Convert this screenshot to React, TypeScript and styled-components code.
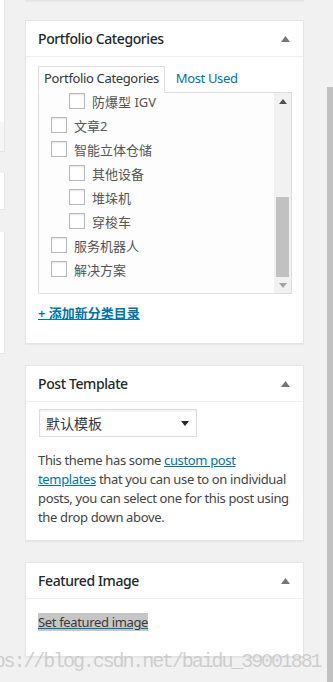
import React from "react";
import styled, { createGlobalStyle } from "styled-components";

const GlobalStyle = createGlobalStyle`
  html, body { margin: 0; padding: 0; background: #f1f1f1; }
  body {
    font-family: "Noto Sans", "Noto Sans CJK SC", sans-serif;
    font-size: 13px;
    color: #444;
  }
  * { box-sizing: border-box; }
`;

const Page = styled.div`
  position: relative;
  display: flex;
  width: 333px;
  height: 682px;
  overflow: hidden;
  background: #f1f1f1;
`;

const LeftCol = styled.div`
  flex: none;
  width: 5px;
  display: flex;
  flex-direction: column;
`;

const LeftBox = styled.div<{ $h: number; $mt: number; $tone?: string }>`
  height: ${(p) => p.$h}px;
  margin-top: ${(p) => p.$mt}px;
  background: ${(p) => p.$tone || "#fff"};
  border-right: 1px solid #e5e5e5;
  border-bottom: 1px solid #e5e5e5;
`;

const MainCol = styled.div`
  flex: none;
  width: 279px;
  margin-left: 20px;
  display: flex;
  flex-direction: column;
`;

const PrevEdge = styled.div`
  height: 1px;
  border-bottom: 1px solid #e5e5e5;
  box-shadow: 0 1px 1px rgba(0, 0, 0, 0.04);
`;

const Postbox = styled.section<{ $mt: number }>`
  margin-top: ${(p) => p.$mt}px;
  background: #fff;
  border: 1px solid #e5e5e5;
  box-shadow: 0 1px 1px rgba(0, 0, 0, 0.04);
`;

const Header = styled.div`
  display: flex;
  align-items: center;
  justify-content: space-between;
  padding: 8px 13px 8px 12px;
  border-bottom: 1px solid #eee;
`;

const Title = styled.h2`
  margin: 0;
  font-size: 14px;
  line-height: 19px;
  font-weight: 500;
  letter-spacing: -0.4px;
  color: #23282d;
`;

const Inside = styled.div<{ $pad: string }>`
  padding: ${(p) => p.$pad};
`;

const Tabs = styled.div`
  display: flex;
  align-items: flex-end;
`;

const Tab = styled.div<{ $active?: boolean }>`
  position: relative;
  z-index: 1;
  padding: 3px 5px 5px;
  margin-left: ${(p) => (p.$active ? 0 : 5)}px;
  margin-bottom: -1px;
  line-height: 17px;
  font-size: 13px;
  letter-spacing: -0.35px;
  white-space: nowrap;
  color: ${(p) => (p.$active ? "#32373c" : "#0073aa")};
  background: ${(p) => (p.$active ? "#fdfdfd" : "transparent")};
  border: 1px solid ${(p) => (p.$active ? "#ddd" : "transparent")};
  border-bottom-color: ${(p) => (p.$active ? "#fdfdfd" : "transparent")};
`;

const Panel = styled.div`
  display: flex;
  height: 202px;
  border: 1px solid #ddd;
  background: #fdfdfd;
`;

const List = styled.div`
  flex: 1;
  overflow: hidden;
  padding-left: 12px;
`;

const ListInner = styled.div`
  margin-top: -4px;
`;

const Row = styled.div<{ $level: number }>`
  display: flex;
  align-items: center;
  gap: 7px;
  height: 24px;
  padding-left: ${(p) => p.$level * 18}px;
`;

const Check = styled.span`
  flex: none;
  width: 16px;
  height: 16px;
  background: #fff;
  border: 1px solid #b4b9be;
  box-shadow: inset 0 1px 2px rgba(0, 0, 0, 0.1);
`;

const RowLabel = styled.span`
  font-size: 13px;
  color: #555;
  white-space: nowrap;
`;

const Scrollbar = styled.div`
  flex: none;
  width: 17px;
  display: flex;
  flex-direction: column;
  background: #f1f1f1;
`;

const ScrollBtn = styled.div<{ $h: number }>`
  height: ${(p) => p.$h}px;
  display: flex;
  align-items: center;
  justify-content: center;
`;

const Track = styled.div`
  flex: 1;
  display: flex;
  flex-direction: column;
  justify-content: flex-end;
  padding: 0 2px;
`;

const Thumb = styled.div`
  height: 80px;
  background: #c1c1c1;
`;

const AddNew = styled.a`
  display: block;
  width: fit-content;
  margin-top: 10px;
  line-height: 19px;
  font-size: 13px;
  font-weight: 600;
  color: #0073aa;
  text-decoration: underline;
`;

const Select = styled.div`
  width: 158px;
  height: 28px;
  margin-left: 1px;
  display: flex;
  align-items: center;
  justify-content: space-between;
  padding: 0 7px 0 6px;
  border: 1px solid #ddd;
  background: #fff;
  box-shadow: inset 0 1px 2px rgba(0, 0, 0, 0.07);
  font-size: 14px;
  color: #32373c;
`;

const Desc = styled.p`
  margin: 14px 0 0;
  font-size: 13px;
  line-height: 19px;
  letter-spacing: -0.35px;
  color: #444;
  white-space: nowrap;
`;

const Link = styled.a`
  color: #0073aa;
  text-decoration: underline;
`;

const FeaturedP = styled.p`
  margin: 14px 0 13px;
  line-height: 18px;
  height: 18px;
`;

const SetLink = styled.a`
  display: inline-block;
  vertical-align: top;
  line-height: 18px;
  font-size: 13px;
  letter-spacing: -0.35px;
  background: #c6c6c6;
  color: #3a3a3a;
  text-decoration: underline;
  text-decoration-color: #0073aa;
`;

const RightRail = styled.div`
  flex: none;
  width: 6px;
  margin-left: auto;
  padding-top: 87px;
  display: flex;
  flex-direction: column;
`;

const RailThumb = styled.div`
  flex: 1;
  background: #c1c1c1;
`;

const Watermark = styled.div`
  position: absolute;
  left: -36px;
  top: 650px;
  font-family: "Liberation Mono", monospace;
  font-size: 20px;
  letter-spacing: -2.1px;
  line-height: 24px;
  color: rgba(190, 190, 190, 0.7);
  white-space: nowrap;
  pointer-events: none;
`;

const Toggle = () => (
  <svg width="9" height="6" viewBox="0 0 9 6">
    <path d="M0 6 L4.5 0 L9 6 Z" fill="#72777c" />
  </svg>
);

const Arrow = ({ up, color }: { up?: boolean; color: string }) => (
  <svg width="8" height="5" viewBox="0 0 8 5">
    <path d={up ? "M0 5 L4 0 L8 5 Z" : "M0 0 L4 5 L8 0 Z"} fill={color} />
  </svg>
);

const rows: { label: string; level: number }[] = [
  { label: "防爆型 IGV", level: 1 },
  { label: "文章2", level: 0 },
  { label: "智能立体仓储", level: 0 },
  { label: "其他设备", level: 1 },
  { label: "堆垛机", level: 1 },
  { label: "穿梭车", level: 1 },
  { label: "服务机器人", level: 0 },
  { label: "解决方案", level: 0 },
];

export default function App() {
  return (
    <>
      <GlobalStyle />
      <Page>
        <LeftCol>
          <LeftBox $h={123} $mt={0} />
          <LeftBox $h={30} $mt={-1} $tone="#f6f6f6" />
          <LeftBox $h={37} $mt={21} />
          <LeftBox $h={36} $mt={22} />
          <LeftBox $h={87} $mt={-1} />
        </LeftCol>

        <MainCol>
          <PrevEdge />
          <Postbox $mt={19}>
            <Header>
              <Title>Portfolio Categories</Title>
              <Toggle />
            </Header>
            <Inside $pad="9px 11px 20px 12px">
              <Tabs>
                <Tab $active>Portfolio Categories</Tab>
                <Tab>Most Used</Tab>
              </Tabs>
              <Panel>
                <List>
                  <ListInner>
                    {rows.map((r) => (
                      <Row key={r.label} $level={r.level}>
                        <Check />
                        <RowLabel>{r.label}</RowLabel>
                      </Row>
                    ))}
                  </ListInner>
                </List>
                <Scrollbar>
                  <ScrollBtn $h={17}>
                    <Arrow up color="#505050" />
                  </ScrollBtn>
                  <Track>
                    <Thumb />
                  </Track>
                  <ScrollBtn $h={16}>
                    <Arrow color="#a3a3a3" />
                  </ScrollBtn>
                </Scrollbar>
              </Panel>
              <AddNew>+ 添加新分类目录</AddNew>
            </Inside>
          </Postbox>

          <Postbox $mt={21}>
            <Header>
              <Title>Post Template</Title>
              <Toggle />
            </Header>
            <Inside $pad="7px 12px 13px">
              <Select>
                <span>默认模板</span>
                <Arrow color="#23282d" />
              </Select>
              <Desc>
                This theme has some <Link>custom post</Link>
                <br />
                <Link>templates</Link> that you can use to on individual
                <br />
                posts, you can select one for this post using
                <br />
                the drop down above.
              </Desc>
            </Inside>
          </Postbox>

          <Postbox $mt={21}>
            <Header>
              <Title>Featured Image</Title>
              <Toggle />
            </Header>
            <Inside $pad="0 12px 12px">
              <FeaturedP>
                <SetLink>Set featured image</SetLink>
              </FeaturedP>
            </Inside>
          </Postbox>
        </MainCol>

        <RightRail>
          <RailThumb />
        </RightRail>

        <Watermark>https://blog.csdn.net/baidu_39001881</Watermark>
      </Page>
    </>
  );
}
